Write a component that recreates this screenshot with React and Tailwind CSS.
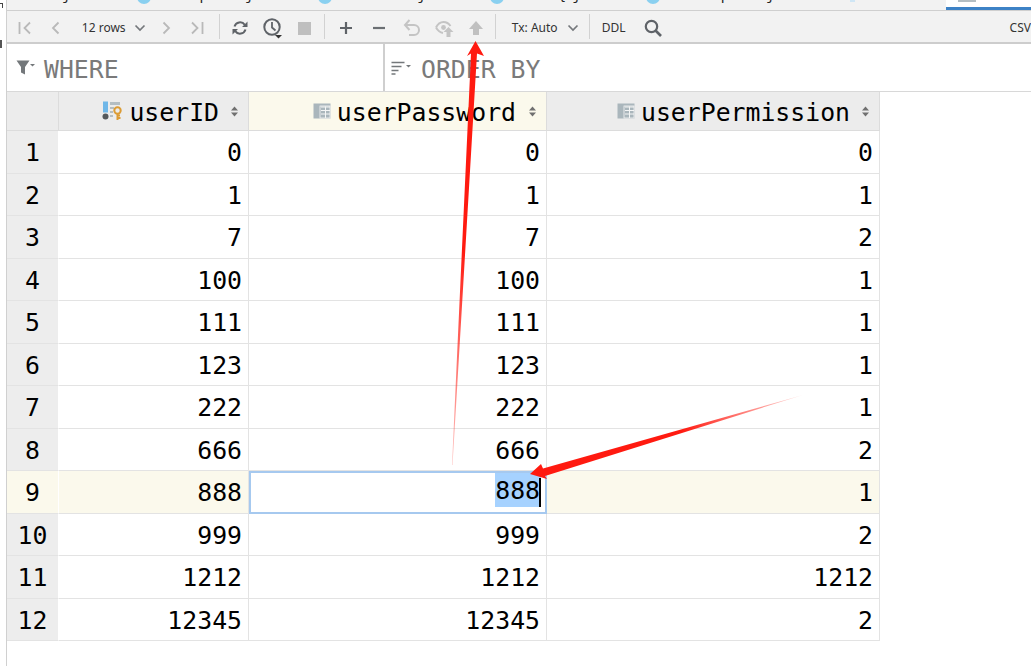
import React from "react";

const mono = "font-['DejaVu_Sans_Mono','Liberation_Mono',monospace]";
const ui = "font-['Noto_Sans','Open_Sans',sans-serif]";

const rows = [
  ["0", "0", "0"],
  ["1", "1", "1"],
  ["7", "7", "2"],
  ["100", "100", "1"],
  ["111", "111", "1"],
  ["123", "123", "1"],
  ["222", "222", "1"],
  ["666", "666", "2"],
  ["888", "888", "1"],
  ["999", "999", "2"],
  ["1212", "1212", "1212"],
  ["12345", "12345", "2"],
];

const Ico = ({ w = 16, h = 16, children }) => (
  <svg width={w} height={h} viewBox={`0 0 ${w} ${h}`} fill="none" className="block">
    {children}
  </svg>
);

const Sep = ({ className }) => <div className={`w-px h-[25px] -mt-[3px] bg-[#d2d2d2] ${className}`} />;

const Chevron = ({ dir, color = "#b9b9b9" }) => (
  <Ico>
    <path d={dir === "l" ? "M10.500 2.500 5 8l5.500 5.500" : "M5.500 2.500 11 8l-5.500 5.500"} stroke={color} strokeWidth="1.800" />
  </Ico>
);

const Down = () => (
  <Ico w={12} h={8}>
    <path d="M1.500 1.500 6 6l4.500-4.500" stroke="#75787c" strokeWidth="1.700" />
  </Ico>
);

const TableIcon = () => (
  <Ico w={18} h={16}>
    <rect x="0.500" y="0.500" width="17" height="15" fill="#aab6bc" />
    <path d="M8 4h9M8 7.500h9M8 11h9M12.500 3.500V15" stroke="#f4f5f5" strokeWidth="1" />
    <rect x="7" y="3" width="10" height="12" stroke="#f4f5f5" strokeWidth="0.800" />
  </Ico>
);

const KeyIcon = () => (
  <Ico w={21} h={20}>
    <rect x="1" y="0.500" width="5" height="11" fill="#6fb7e8" />
    <circle cx="3.500" cy="15.500" r="3" fill="#55595c" />
    <path d="M8 1h10v3H8zM8 6h4v2H8zM8 10h3v2H8zM8 14h3v2H8z" fill="#b4bec3" />
    <circle cx="15.500" cy="9.500" r="3.200" stroke="#dc9c35" strokeWidth="2" />
    <path d="M15.500 12.500V19M15.500 17h3M15.500 14.500h2.500" stroke="#dc9c35" strokeWidth="2" />
  </Ico>
);

const SortArrows = ({ className }) => (
  <div className={className}>
    <Ico w={7} h={11}>
      <path d="M3.500 0.500 7 4.500H0zM0 6.500h7L3.500 10.500z" fill="#707070" />
    </Ico>
  </div>
);

const HeaderCell = ({ icon, title, active, arrows }) => (
  <div
    className={`flex items-center justify-end h-[39px] border-b border-r border-[#dcdcdc] ${
      active ? "bg-[#fbf9ec]" : "bg-[#ececec]"
    }`}
  >
    {icon}
    <span className={`${mono} text-[24.800px] leading-none pt-[5px] text-black ml-[6px]`}>{title}</span>
    <SortArrows className={arrows} />
  </div>
);

const Tick = ({ className, children }) => (
  <span className={`${mono} text-[14px] leading-[14px] text-[#222] -mt-[12px] shrink-0 ${className}`}>{children}</span>
);

const Dot = ({ className }) => <div className={`w-[14px] h-[14px] rounded-full bg-[#8ad0f0] shrink-0 -mt-[10px] ${className}`} />;

export default function App() {
  return (
    <div className={`relative w-[1031px] h-[666px] overflow-hidden bg-white ${ui}`}>
      <div className="flex h-full">
        {/* narrow sliver of the panel on the left */}
        <div className="w-[6px] shrink-0 bg-white flex flex-col items-start">
          <div className="mt-[3px] w-[3px] h-[5px] border-t border-r border-[#444]" />
          <div className="mt-[32px] w-[2px] h-[8px] bg-[#555]" />
        </div>
        <div className="w-[1025px] border-l border-[#d0d0d0] flex flex-col">
          {/* clipped tabs */}
          <div className="flex h-[11px] shrink-0 overflow-hidden bg-[#f2f2f2] border-b border-[#cfcfcf] items-start">
            <Tick className="ml-[55px]">j</Tick>
            <Dot className="ml-[67px]" />
            <Tick className="ml-[48px]">p</Tick>
            <Tick className="ml-[37px]">j</Tick>
            <Dot className="ml-[65px]" />
            <Tick className="ml-[85px]">j</Tick>
            <Dot className="ml-[64px]" />
            <Tick className="ml-[54px]">{"{"}</Tick>
            <Tick className="ml-[6px]">j</Tick>
            <Dot className="ml-[65px]" />
            <Tick className="ml-[61px]">p</Tick>
            <Tick className="ml-[37px]">j</Tick>
            <div className="ml-[75px] w-[5px] h-[2px] bg-[#cfe6f5] shrink-0" />
            <div className="ml-[91px] w-[89px] h-[10px] bg-white shrink-0 border-b-[3px] border-[#3d82c6] pl-[12px]">
              <div className="w-[18px] h-[2px] bg-[#b4bec3]" />
            </div>
          </div>

          {/* toolbar */}
          <div className="flex items-center h-[33px] pt-[3px] shrink-0 bg-[#f2f2f2] border-b-2 border-[#cdcdcd] text-[12px] text-[#333] overflow-hidden">
            <div className="w-[36px] flex justify-center">
              <Ico>
                <path d="M2.500 2v12" stroke="#b9b9b9" strokeWidth="1.800" />
                <path d="M13 2.500 7.500 8l5.500 5.500" stroke="#b9b9b9" strokeWidth="1.800" />
              </Ico>
            </div>
            <div className="w-[26px] flex justify-center">
              <Chevron dir="l" />
            </div>
            <span className="ml-[13px] w-[45px] shrink-0 whitespace-nowrap">12 rows</span>
            <div className="w-[26px] flex justify-center">
              <Down />
            </div>
            <div className="w-[26px] flex justify-center">
              <Chevron dir="r" />
            </div>
            <div className="w-[36px] flex justify-center">
              <Ico>
                <path d="M3 2.500 8.500 8 3 13.500" stroke="#b9b9b9" strokeWidth="1.800" />
                <path d="M13.500 2v12" stroke="#b9b9b9" strokeWidth="1.800" />
              </Ico>
            </div>
            <Sep className="ml-[4px]" />
            <div className="w-[40px] flex justify-center">
              <Ico>
                <path d="M2.500 6.500A5.800 5.800 0 0 1 12.800 4.800" stroke="#5f6368" strokeWidth="2" />
                <path d="M13.500 9.500A5.800 5.800 0 0 1 3.200 11.200" stroke="#5f6368" strokeWidth="2" />
                <path d="M10 7h5.500V1.500zM6 9H.5v5.500z" fill="#5f6368" />
              </Ico>
            </div>
            <div className="w-[26px] flex justify-center">
              <Ico w={22} h={22}>
                <circle cx="11" cy="10" r="7.700" stroke="#5f6368" strokeWidth="2" />
                <path d="M11 5v5.500l3.500 3" stroke="#5f6368" strokeWidth="1.800" />
                <path d="M14 18h7l-3.500 3.500z" fill="#333" />
              </Ico>
            </div>
            <div className="w-[39px] flex justify-center">
              <div className="w-[13px] h-[13px] bg-[#bfbfbf]" />
            </div>
            <Sep />
            <div className="w-[41px] pl-px flex justify-center">
              <Ico>
                <path d="M8 2v12M2 8h12" stroke="#5f6368" strokeWidth="2.200" />
              </Ico>
            </div>
            <div className="w-[26px] flex justify-center">
              <Ico>
                <path d="M2 8h12" stroke="#6b6f73" strokeWidth="2.200" />
              </Ico>
            </div>
            <div className="w-[40px] flex justify-center">
              <Ico w={18} h={18}>
                <path d="M2 6h9a5 5 0 0 1 0 10H6" stroke="#c4c4c4" strokeWidth="2" />
                <path d="M6.500 1 2 6l4.500 5" stroke="#c4c4c4" strokeWidth="2" />
              </Ico>
            </div>
            <div className="w-[26px] flex justify-center">
              <Ico w={19} h={17}>
                <path d="M1 7.500C3 3.500 6 2 8.500 2s5 1 7 4" stroke="#c4c4c4" strokeWidth="2" />
                <path d="M1 7.500C3 11 5 12.500 8 13" stroke="#c4c4c4" strokeWidth="2" />
                <circle cx="8.500" cy="7.500" r="2.400" fill="#c4c4c4" />
                <path d="M13.500 7 18.500 12h-3v5h-4v-5h-3z" fill="#c4c4c4" />
              </Ico>
            </div>
            <div className="w-[36px] flex justify-center">
              <Ico w={14} h={14}>
                <path d="M7 0 14 8h-4v6H4V8H0z" fill="#c0c0c0" />
              </Ico>
            </div>
            <Sep className="ml-[1px]" />
            <span className="ml-[16px] w-[48px] shrink-0 whitespace-nowrap">Tx: Auto</span>
            <div className="w-[26px] flex justify-center">
              <Down />
            </div>
            <Sep className="ml-[3px]" />
            <span className="ml-[12px] w-[25px] shrink-0">DDL</span>
            <div className="w-[52px] flex justify-center">
              <Ico w={18} h={18}>
                <circle cx="7.500" cy="7.500" r="5.700" stroke="#5f6368" strokeWidth="2.200" />
                <path d="m11.500 11.500 5.500 5.500" stroke="#5f6368" strokeWidth="2.600" />
              </Ico>
            </div>
            <span className="ml-[331px] shrink-0">CSV</span>
          </div>

          {/* filter row */}
          <div className="flex h-[48px] shrink-0 border-b border-[#d8d8d8] bg-white">
            <div className="w-[376px] shrink-0 flex items-center pl-[9px]">
              <Ico w={19} h={15}>
                <path d="M0.500 0.500h13L9 7v7.500L5 12.500V7z" fill="#74787b" />
                <path d="M14 4h5l-2.500 2.500z" fill="#74787b" />
              </Ico>
              <span className={`${mono} text-[24.800px] leading-none pt-[6px] text-[#7a7a7a] ml-[9px]`}>WHERE</span>
            </div>
            <div className="w-[2px] bg-[#cfcfcf]" />
            <div className="flex items-center pl-[6px]">
              <Ico w={20} h={14}>
                <path d="M0.500 1.500h13M0.500 5.500h10M0.500 9.500h7M0.500 13h4" stroke="#74787b" strokeWidth="1.600" />
                <path d="M15 4h5l-2.500 2.500z" fill="#74787b" />
              </Ico>
              <span className={`${mono} text-[24.800px] leading-none pt-[6px] text-[#7a7a7a] ml-[10px] whitespace-nowrap`}>ORDER BY</span>
            </div>
          </div>

          {/* result table */}
          <div className="grid grid-cols-[52px_190px_298px_333px] w-[873px]">
            <div className="h-[39px] bg-[#ececec] border-b border-r border-[#dcdcdc]" />
            <HeaderCell icon={<KeyIcon />} title="userID" arrows="ml-[12px] mr-[10px]" />
            <HeaderCell icon={<TableIcon />} title="userPassword" active arrows="ml-[13px] mr-[10px]" />
            <HeaderCell icon={<TableIcon />} title="userPermission" arrows="ml-[12px] mr-[10px]" />
            {rows.map((row, i) => {
              const current = i === 8;
              const numCell = `h-[42.5px] flex items-center justify-end pt-[2px] pr-[6px] border-b border-r border-[#e3e3e3] ${mono} text-[24.800px] text-black ${
                current ? "bg-[#fbf9ec]" : "bg-white"
              }`;
              return (
                <React.Fragment key={i}>
                  <div
                    className={`h-[42.5px] flex items-center justify-center pt-[2px] border-b border-r border-b-[#e3e3e3] border-r-white ${mono} text-[24.800px] text-black ${
                      current ? "bg-[#fbf9ec]" : "bg-[#ededed]"
                    }`}
                  >
                    {i + 1}
                  </div>
                  <div className={numCell}>{row[0]}</div>
                  {current ? (
                    <div className={`h-[42.5px] flex items-start justify-end pr-[4px] border-2 border-[#a6c9ef] bg-white ${mono} text-[24.800px] text-black`}>
                      <span className="relative inline-block h-[34px] leading-[36px] bg-[#a6d2ff] pr-px">
                        {row[1]}
                        <span className="absolute right-0 bottom-0 w-[2px] h-[29px] bg-black" />
                      </span>
                    </div>
                  ) : (
                    <div className={numCell}>{row[1]}</div>
                  )}
                  <div className={numCell}>{row[2]}</div>
                </React.Fragment>
              );
            })}
          </div>
        </div>
      </div>

      {/* red annotation arrows drawn over the screenshot */}
      <svg width="1031" height="666" className="absolute inset-0 pointer-events-none">
        <defs>
          <linearGradient id="fadeUp" gradientUnits="userSpaceOnUse" x1="452" y1="465" x2="470" y2="250">
            <stop offset="0" stopColor="#ff1a10" stopOpacity="0.25" />
            <stop offset="1" stopColor="#ff1a10" />
          </linearGradient>
          <linearGradient id="fadeLeft" gradientUnits="userSpaceOnUse" x1="803" y1="395" x2="680" y2="430">
            <stop offset="0" stopColor="#ff1a10" stopOpacity="0.15" />
            <stop offset="1" stopColor="#ff1a10" />
          </linearGradient>
        </defs>
        <polygon points="475.500,41 484,56 477,53.500 452.500,465 452,465 471,53.500 467,56" fill="url(#fadeUp)" />
        <polygon points="530,474 541,464 543,468.500 803,395 545,476 547,479" fill="url(#fadeLeft)" />
      </svg>
    </div>
  );
}
